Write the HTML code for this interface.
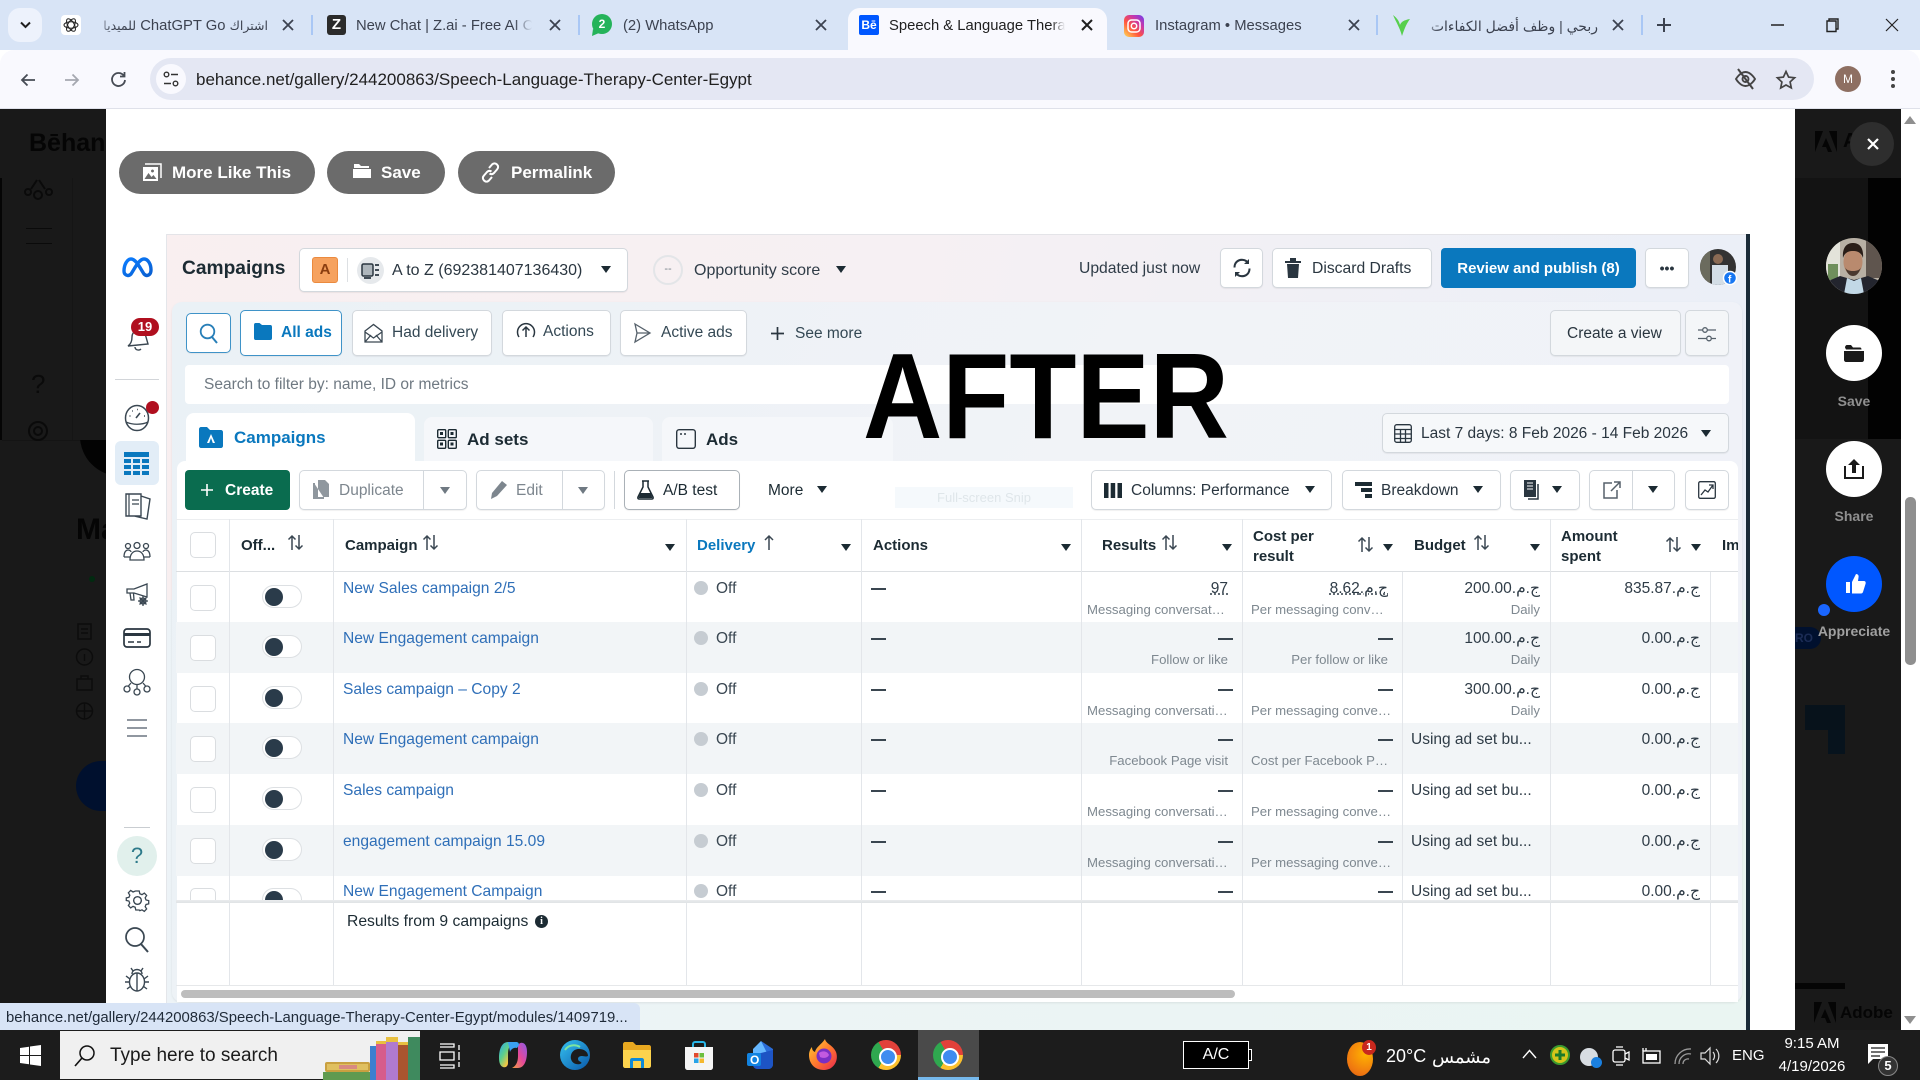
<!DOCTYPE html>
<html lang="en"><head><meta charset="utf-8"><title>Behance</title>
<style>
*{box-sizing:border-box}
html,body{margin:0;padding:0;width:1920px;height:1080px;overflow:hidden;background:#fff}
body{font-family:"Liberation Sans","Noto Sans CJK SC","DejaVu Sans",sans-serif;position:relative;color:#1c2b33}
.a,.t,.b{position:absolute}
.t{white-space:nowrap;line-height:20px;height:20px;transform:translateY(1px)}
.b{background:#fff;border:1px solid #d3d8dd;border-radius:5px;box-shadow:0 1px 1px rgba(0,0,0,.06)}
svg{position:absolute;overflow:visible}
.tab{font-size:14.8px;color:#3c4250}
.ar{font-size:12.5px}
.sep{position:absolute;top:15px;width:2px;height:20px;background:#a9c7f5}
.btn{position:absolute;top:151px;height:43px;background:#6b6b6b;border-radius:22px;color:#fff;font-weight:700;font-size:17px;line-height:43px}
.f{font-size:15.5px;color:#344854}
.c{position:absolute;width:0;height:0;border-left:5.5px solid transparent;border-right:5.5px solid transparent;border-top:7px solid #1c2b33}
.r{position:absolute;left:176px;width:1562px;height:51px}
.r.g{background:#f2f5f7}
.ck{position:absolute;left:14px;top:13px;width:26px;height:26px;background:#fff;border:1px solid #dadde0;border-radius:5px}
.tg{position:absolute;left:86px;top:13px;width:40px;height:23px;background:#fff;border:1px solid #dde0e3;border-radius:12px}
.tg:after{content:"";position:absolute;left:2px;top:2px;width:18px;height:18px;border-radius:50%;background:#2a3b4a}
.nm{position:absolute;left:167px;top:7px;font-size:15.6px;line-height:20px;color:#2f6fb8;white-space:nowrap}
.dot{position:absolute;left:518px;top:9px;width:14px;height:14px;border-radius:50%;background:#c6ccd2}
.of{position:absolute;left:540px;top:7px;font-size:15.5px;line-height:20px;color:#3a4752}
.d{position:absolute;height:2px;width:15px;background:#3a4650;top:16px}
.m{position:absolute;top:7px;font-size:15.5px;line-height:20px;color:#2f3c47;text-align:right;white-space:nowrap}
.s{position:absolute;top:29px;font-size:13.2px;line-height:18px;color:#7e8890;white-space:nowrap;text-align:right}
.h{font-size:15px;font-weight:700;color:#1c2b33}
.v{position:absolute;top:519px;width:1px;background:#e3e6ea}
.lb{color:#8f8f8f;font-weight:700;font-size:14px;text-align:center;width:100px;left:1803px}
.chr{position:absolute;top:1040px;width:30px;height:30px;border-radius:50%;background:conic-gradient(from -30deg,#e2413a 0 120deg,#fbc02d 120deg 240deg,#2fa84f 240deg 360deg)}
.chr:after{content:"";position:absolute;left:8px;top:8px;width:14px;height:14px;border-radius:50%;background:#3f8cf0;border:2px solid #fff}
</style></head><body>

<!-- browser chrome -->
<div class="a" style="left:0;top:0;width:1920px;height:50px;background:#d8e4f6"></div>
<div class="a" style="left:0;top:50px;width:1920px;height:59px;background:#f9f9fe;border-bottom:1px solid #dfe1ea;border-radius:14px 14px 0 0"></div>
<div class="a" style="left:8px;top:8px;width:34px;height:34px;background:#edf2fc;border-radius:12px"></div>
<svg style="left:20px;top:21px" width="11" height="8" viewBox="0 0 11 8"><path d="M1 1.500l4.500 4.500 4.500-4.500" fill="none" stroke="#1f1f1f" stroke-width="2"/></svg>

<div class="a" style="left:61px;top:15px;width:20px;height:20px;background:#fff;border-radius:4px"></div>
<svg style="left:63px;top:17px" width="16" height="16" viewBox="0 0 16 16"><g fill="none" stroke="#222" stroke-width="1"><ellipse cx="8" cy="8" rx="7" ry="3.200"/><ellipse cx="8" cy="8" rx="7" ry="3.200" transform="rotate(60 8 8)"/><ellipse cx="8" cy="8" rx="7" ry="3.200" transform="rotate(120 8 8)"/></g></svg>
<div class="t tab" dir="rtl" style="left:97px;top:15px;width:171px;overflow:hidden;-webkit-mask-image:linear-gradient(90deg,transparent,#000 14px)"><span class="ar">اشتراك</span> ChatGPT Go <span class="ar">للميديا</span></div>
<svg style="left:282px;top:19px" width="12" height="12" viewBox="0 0 12 12"><path d="M1 1l10 10M11 1L1 11" stroke="#3c4250" stroke-width="1.800"/></svg>
<div class="sep" style="left:311px"></div>
<div class="a" style="left:327px;top:15px;width:19px;height:20px;background:#2b2b2b;border-radius:3px;color:#fff;font:700 15px/20px 'Liberation Sans';text-align:center">Z</div>
<div class="t tab" style="left:356px;top:15px;width:176px;overflow:hidden;-webkit-mask-image:linear-gradient(270deg,transparent,#000 18px)">New Chat | Z.ai - Free AI Chatbot</div>
<svg style="left:549px;top:19px" width="12" height="12" viewBox="0 0 12 12"><path d="M1 1l10 10M11 1L1 11" stroke="#3c4250" stroke-width="1.800"/></svg>
<div class="sep" style="left:578px"></div>
<div class="a" style="left:592px;top:14px;width:20px;height:20px;background:#25b35a;border-radius:50%;color:#fff;font:700 12px/20px 'Liberation Sans';text-align:center">2</div>
<svg style="left:592px;top:29px" width="8" height="7" viewBox="0 0 8 7"><path d="M1 0L0 7l7-3z" fill="#25b35a"/></svg>
<div class="t tab" style="left:623px;top:15px">(2) WhatsApp</div>
<svg style="left:815px;top:19px" width="12" height="12" viewBox="0 0 12 12"><path d="M1 1l10 10M11 1L1 11" stroke="#3c4250" stroke-width="1.800"/></svg>

<div class="a" style="left:848px;top:8px;width:259px;height:44px;background:#f9f9fe;border-radius:12px 12px 0 0"></div>
<div class="a" style="left:859px;top:15px;width:20px;height:20px;background:#0057ff;border-radius:2px;color:#fff;font:700 12px/20px 'Liberation Sans';text-align:center">Bē</div>
<div class="t tab" style="left:889px;top:15px;width:176px;overflow:hidden;color:#1f1f1f;-webkit-mask-image:linear-gradient(270deg,transparent,#000 14px)">Speech &amp; Language Therapy Center</div>
<svg style="left:1081px;top:19px" width="12" height="12" viewBox="0 0 12 12"><path d="M1 1l10 10M11 1L1 11" stroke="#1f1f1f" stroke-width="2"/></svg>

<div class="a" style="left:1124px;top:15px;width:20px;height:22px;border-radius:5px;background:linear-gradient(45deg,#fd5 0,#ff543e 40%,#c837ab 70%,#6a3ff0)"></div>
<svg style="left:1124px;top:16px" width="20" height="20" viewBox="0 0 20 20"><rect x="4" y="4" width="12" height="12" rx="3.500" fill="none" stroke="#fff" stroke-width="1.500"/><circle cx="10" cy="10" r="2.700" fill="none" stroke="#fff" stroke-width="1.500"/></svg>
<div class="t tab" style="left:1155px;top:15px">Instagram • Messages</div>
<svg style="left:1348px;top:19px" width="12" height="12" viewBox="0 0 12 12"><path d="M1 1l10 10M11 1L1 11" stroke="#3c4250" stroke-width="1.800"/></svg>
<div class="sep" style="left:1376px"></div>
<svg style="left:1392px;top:14px" width="20" height="23" viewBox="0 0 20 23"><path d="M1 1c4 3 6 6 7 10 1-3 4-5 10-6-3 4-5 8-8 17C8 14 4 8 1 1z" fill="#57cf4d"/></svg>
<div class="t tab ar" dir="rtl" style="left:1424px;top:15px;width:174px;overflow:hidden;font-size:14px;-webkit-mask-image:linear-gradient(90deg,transparent,#000 14px)">ربحي | وظف أفضل الكفاءات</div>
<svg style="left:1612px;top:19px" width="12" height="12" viewBox="0 0 12 12"><path d="M1 1l10 10M11 1L1 11" stroke="#3c4250" stroke-width="1.800"/></svg>
<div class="sep" style="left:1641px"></div>
<svg style="left:1657px;top:18px" width="14" height="14" viewBox="0 0 14 14"><path d="M7 0v14M0 7h14" stroke="#3c4250" stroke-width="2"/></svg>
<svg style="left:1771px;top:24px" width="13" height="2" viewBox="0 0 13 2"><path d="M0 1h13" stroke="#222" stroke-width="1.500"/></svg>
<svg style="left:1826px;top:18px" width="13" height="14" viewBox="0 0 13 14"><path d="M3 3V1h9v10h-2M1 3h9v10.500H1z" fill="none" stroke="#222" stroke-width="1.400"/></svg>
<svg style="left:1885px;top:18px" width="14" height="14" viewBox="0 0 14 14"><path d="M1 1l12 12M13 1L1 13" stroke="#222" stroke-width="1.200"/></svg>

<!-- toolbar -->
<svg style="left:20px;top:72px" width="16" height="16" viewBox="0 0 16 16"><path d="M15 8H2M7.500 2.500L2 8l5.500 5.500" fill="none" stroke="#474c55" stroke-width="1.800"/></svg>
<svg style="left:64px;top:72px" width="16" height="16" viewBox="0 0 16 16"><path d="M1 8h13M8.500 2.500L14 8l-5.500 5.500" fill="none" stroke="#a5a8b0" stroke-width="1.800"/></svg>
<svg style="left:110px;top:71px" width="17" height="17" viewBox="0 0 17 17"><path d="M14 5A6.500 6.500 0 1 0 15 9M14.500 1v4.500H10" fill="none" stroke="#474c55" stroke-width="1.800"/></svg>
<div class="a" style="left:150px;top:58px;width:1664px;height:42px;background:#e4e7f3;border-radius:21px"></div>
<div class="a" style="left:156px;top:64px;width:30px;height:30px;background:#f9f9fe;border-radius:50%"></div>
<svg style="left:163px;top:71px" width="16" height="16" viewBox="0 0 16 16"><circle cx="3.500" cy="3.500" r="2.300" fill="none" stroke="#333" stroke-width="1.400"/><circle cx="12.500" cy="12.500" r="2.300" fill="none" stroke="#333" stroke-width="1.400"/><path d="M8 3.500h7M1 12.500h7" stroke="#333" stroke-width="1.400"/></svg>
<div class="t" style="left:196px;top:69px;font-size:17px;color:#1f1f1f">behance.net/gallery/244200863/Speech-Language-Therapy-Center-Egypt</div>
<svg style="left:1734px;top:68px" width="23" height="22" viewBox="0 0 23 22"><path d="M2 11s4-7 9.500-7 9.500 7 9.500 7-4 7-9.500 7S2 11 2 11z" fill="none" stroke="#444" stroke-width="1.900"/><circle cx="11.500" cy="11" r="3" fill="none" stroke="#444" stroke-width="1.900"/><path d="M4 1l15 20" stroke="#444" stroke-width="2"/></svg>
<svg style="left:1776px;top:70px" width="20" height="19" viewBox="0 0 20 19"><path d="M10 1.500l2.600 5.600 6 .7-4.500 4.100 1.200 6L10 15l-5.300 3 1.200-6L1.400 7.800l6-.7z" fill="none" stroke="#444" stroke-width="1.700"/></svg>
<div class="a" style="left:1835px;top:66px;width:26px;height:26px;border-radius:50%;background:#8e6f62;color:#fff;font:12px/26px 'Liberation Sans';text-align:center">M</div>
<div class="a" style="left:1891px;top:70px;width:4px;height:4px;border-radius:50%;background:#444;box-shadow:0 7px 0 #444,0 14px 0 #444"></div>

<!-- dark left overlay -->
<div class="a" style="left:0;top:109px;width:106px;height:921px;background:#191919;overflow:hidden">
  <div class="a" style="left:0;top:69px;width:2px;height:262px;background:#050505"></div>
  <div class="a" style="left:72px;top:69px;width:1px;height:262px;background:#151515"></div>
  <div class="a" style="left:2px;top:331px;width:104px;height:1px;background:#141414"></div>
  <div class="t" style="left:29px;top:19px;font-weight:700;font-size:25px;line-height:28px;height:28px;color:#050505">Bēhance</div>
  <div class="a" style="left:0;top:331px;width:106px;height:40px;overflow:hidden"><div class="a" style="left:80px;top:-44px;width:80px;height:80px;border-radius:50%;background:#030303"></div></div>
  <div class="t" style="left:76px;top:402px;font-weight:700;font-size:30px;line-height:36px;height:36px;color:#050505">Ma</div>
  <div class="a" style="left:89px;top:467px;width:6px;height:6px;border-radius:50%;background:#012a10"></div>
  <div class="a" style="left:76px;top:652px;width:70px;height:50px;border-radius:25px;background:#00102e"></div>
  <svg style="left:23px;top:70px" width="32" height="24" viewBox="0 0 32 24"><circle cx="15" cy="16" r="4" fill="none" stroke="#0a0a0a" stroke-width="2"/><circle cx="5" cy="13" r="3" fill="none" stroke="#0a0a0a" stroke-width="2"/><circle cx="26" cy="13" r="3" fill="none" stroke="#0a0a0a" stroke-width="2"/><path d="M8 10L14 1M22 10L16 1" stroke="#0a0a0a" stroke-width="2"/></svg>
  <div class="a" style="left:26px;top:119px;width:26px;height:16px;border-top:1.500px solid #0a0a0a;border-bottom:1.500px solid #0a0a0a"></div>
  <div class="t" style="left:31px;top:260px;font-size:26px;line-height:28px;height:28px;color:#0a0a0a">?</div>
  <svg style="left:26px;top:310px" width="24" height="24" viewBox="0 0 24 24"><circle cx="12" cy="12" r="9" fill="none" stroke="#0a0a0a" stroke-width="2"/><circle cx="12" cy="12" r="4" fill="none" stroke="#0a0a0a" stroke-width="2"/></svg>
  <svg style="left:76px;top:512px" width="18" height="100" viewBox="0 0 18 100"><g fill="none" stroke="#0c0c0c" stroke-width="1.500"><rect x="2" y="3" width="13" height="15"/><path d="M5 8h7M5 12h7"/><circle cx="8.500" cy="36" r="8"/><path d="M8.500 33v7"/><rect x="1" y="58" width="15" height="11"/><path d="M5 58v-3h7v3"/><circle cx="8.500" cy="90" r="8"/><path d="M1 90h15M8.500 82v16"/></g></svg>
</div>

<!-- dark right overlay -->
<div class="a" style="left:1795px;top:109px;width:106px;height:921px;background:#191919;overflow:hidden">
  <div class="a" style="left:0;top:69px;width:73px;height:261px;background:#131313"></div>
  <div class="a" style="left:73px;top:69px;width:33px;height:261px;background:#020202"></div>
  <svg style="left:20px;top:22px" width="22" height="21" viewBox="0 0 22 21"><path d="M0 0h8L0 21zM22 0h-8l8 21zM11 7l6 14h-4l-2-5H7z" fill="#050505"/></svg>
  <div class="t" style="left:48px;top:21px;font-weight:700;font-size:20px;color:#050505">A</div>
  <div class="a" style="left:0;top:518px;width:26px;height:22px;border-radius:0 12px 12px 0;background:#00102e;color:#1b2c55;font:700 12px/22px 'Liberation Sans';text-align:right;padding-right:8px">RO</div>
  <div class="a" style="left:10px;top:596px;width:40px;height:25px;background:#07121b"></div>
  <div class="a" style="left:33px;top:621px;width:17px;height:24px;background:#07131d"></div>
  <div class="a" style="left:0;top:874px;width:50px;height:6px;background:#050505"></div>
  <svg style="left:19px;top:893px" width="22" height="21" viewBox="0 0 22 21"><path d="M0 0h8L0 21zM22 0h-8l8 21zM11 7l6 14h-4l-2-5H7z" fill="#050505"/></svg>
  <div class="t" style="left:45px;top:893px;font-weight:700;font-size:17px;color:#050505">Adobe</div>
</div>
<div class="a" style="left:1901px;top:109px;width:19px;height:921px;background:#fff"></div>
<div class="a" style="left:1905px;top:497px;width:11px;height:168px;background:#8f8f8f;border-radius:5px"></div>
<svg style="left:1904px;top:116px" width="12" height="8" viewBox="0 0 12 8"><path d="M0 8L6 0l6 8z" fill="#8f8f8f"/></svg>
<svg style="left:1904px;top:1016px" width="12" height="8" viewBox="0 0 12 8"><path d="M0 0l6 8 6-8z" fill="#8f8f8f"/></svg>

<div class="a" style="left:1850px;top:122px;width:44px;height:44px;border-radius:50%;background:#2e2e2e"></div>
<svg style="left:1867px;top:138px" width="12" height="12" viewBox="0 0 12 12"><path d="M1 1l10 10M11 1L1 11" stroke="#fff" stroke-width="2.200"/></svg>
<svg style="left:1826px;top:238px" width="56" height="56" viewBox="0 0 56 56"><defs><clipPath id="av"><circle cx="28" cy="28" r="28"/></clipPath></defs><g clip-path="url(#av)"><rect width="56" height="56" fill="#b8b0a4"/><rect width="14" height="56" fill="#e3e3da"/><rect x="2" y="26" width="10" height="16" fill="#6f8f5c"/><rect x="40" y="0" width="16" height="40" fill="#5f554e"/><path d="M0 56V44l14-6 14 4 14-4 14 6v12z" fill="#23252e"/><path d="M21 40l7 3 7-3 3 16H18z" fill="#c2d8e6"/><ellipse cx="27" cy="24" rx="9.500" ry="13" fill="#b98a6e"/><path d="M17 20c-1-12 5-15 10-15s11 3 10 15c-2-6-6-7-10-7s-8 1-10 7z" fill="#2a1e18"/><path d="M19 29c2 7 5 9 8 9s6-2 8-9c-1 3-4 4-8 4s-7-1-8-4z" fill="#4a382e"/></g></svg>
<div class="a" style="left:1826px;top:325px;width:56px;height:56px;border-radius:50%;background:#fff"></div>
<svg style="left:1844px;top:344px" width="20" height="18" viewBox="0 0 20 18"><path d="M1 3.500C1 2 2 1 3 1h4l2 2.500h7c1 0 1.500 1 1.500 2H2zM0 7h20v9c0 1-1 2-2 2H2c-1 0-2-1-2-2z" fill="#1a1a1a"/></svg>
<div class="t lb" style="top:390px;left:1804px">Save</div>
<div class="a" style="left:1826px;top:441px;width:56px;height:56px;border-radius:50%;background:#fff"></div>
<svg style="left:1844px;top:458px" width="20" height="21" viewBox="0 0 20 21"><path d="M1 8v12h18V8" fill="none" stroke="#1a1a1a" stroke-width="2"/><path d="M10 1l6 6h-4v8H8V7H4z" fill="#1a1a1a"/></svg>
<div class="t lb" style="top:505px;left:1804px">Share</div>
<div class="a" style="left:1826px;top:556px;width:56px;height:56px;border-radius:50%;background:#0057ff"></div>
<svg style="left:1846px;top:574px" width="20" height="20" viewBox="0 0 20 20"><path d="M0 8h4v11H0zM6 8l4-8c2 0 3 1.500 2.500 3.500L12 7h6c1.500 0 2 1.500 1.500 3L17 18c-.4 1-1 1.500-2 1.500H6z" fill="#fff"/></svg>
<div class="a" style="left:1818px;top:604px;width:12px;height:12px;border-radius:50%;background:#1a66ff"></div>
<div class="t lb" style="top:620px;left:1804px;color:#a0a0a0">Appreciate</div>

<!-- white lightbox -->
<div class="a" style="left:106px;top:109px;width:1689px;height:921px;background:#fff"></div>
<div class="btn" style="left:119px;width:196px;padding-left:53px">More Like This</div>
<svg style="left:142px;top:163px" width="20" height="19" viewBox="0 0 20 19"><path d="M3 1h16v14" fill="none" stroke="#fff" stroke-width="1.500"/><rect x="1" y="4" width="15" height="14" fill="#fff"/><path d="M2.500 16l4-6 3 4 2-2 3 4zM12 8a1.500 1.500 0 1 1 0-.01" fill="#6b6b6b"/></svg>
<div class="btn" style="left:327px;width:118px;padding-left:54px">Save</div>
<svg style="left:353px;top:162px" width="18" height="17" viewBox="0 0 18 17"><path d="M1 2h5l2 2h8v2H1zM0 7h18v9H0z" fill="#fff"/></svg>
<div class="btn" style="left:458px;width:157px;padding-left:53px">Permalink</div>
<svg style="left:481px;top:162px" width="19" height="21" viewBox="0 0 19 21"><path d="M8 6l3-3.500c1.500-1.500 3.500-1.500 5 0s1.500 3.500 0 5l-3 3.500c-1.500 1.500-3 1.500-4.500.5M11 15l-3 3.500c-1.500 1.500-3.500 1.500-5 0s-1.500-3.500 0-5l3-3.500c1.500-1.500 3-1.500 4.500-.5" fill="none" stroke="#fff" stroke-width="2"/></svg>

<!-- embedded screenshot -->
<div class="a" style="left:106px;top:234px;width:1642px;height:796px;background:linear-gradient(100deg,#f9eff0 0,#f6f0f3 45%,#e9eff8 100%)"></div>
<div class="a" style="left:106px;top:600px;width:1642px;height:430px;background:linear-gradient(90deg,#edf3f7,#eaf5f2)"></div>
<div class="a" style="left:106px;top:234px;width:1642px;height:1px;background:#e4e4e8"></div>
<div class="a" style="left:1746px;top:234px;width:4px;height:796px;background:#1a2b38"></div>
<div class="a" style="left:106px;top:234px;width:61px;height:769px;background:#fff;border-right:1px solid #e4e6ea"></div>

<!-- sidebar icons -->
<svg style="left:122px;top:256px" width="31" height="23" viewBox="0 0 31 23"><defs><linearGradient id="mg" x1="0" x2="1" y1="0" y2="1"><stop offset="0" stop-color="#0a7cff"/><stop offset="1" stop-color="#0a5fd0"/></linearGradient></defs><path d="M2 15c0-6 3-12 7-12 5 0 9 9 13 15 3 3 7 1 7-4 0-6-3-11-7-11-5 0-9 9-13 15-3 3-7 1-7-3z" fill="none" stroke="url(#mg)" stroke-width="3.400"/></svg>
<svg style="left:126px;top:325px" width="24" height="28" viewBox="0 0 24 28"><path d="M2 21c3-2 4-5 4-9 0-4 3-7 7-7s6 3 7 7l2 7z" fill="#fff" stroke="#3a4752" stroke-width="1.400"/><path d="M9 22c0 3 4 4 6 2" fill="none" stroke="#3a4752" stroke-width="1.400"/></svg>
<div class="a" style="left:131px;top:318px;width:28px;height:18px;background:#b00f1f;border-radius:9px;color:#fff;font:700 13px/18px 'Liberation Sans';text-align:center">19</div>
<div class="a" style="left:115px;top:379px;width:44px;height:1px;background:#d2d5d9"></div>
<svg style="left:124px;top:404px" width="26" height="29" viewBox="0 0 26 29"><ellipse cx="13" cy="14" rx="11.500" ry="12.500" fill="#fff" stroke="#3a4752" stroke-width="1.500"/><path d="M2 18c6 3 16 3 22 0" fill="none" stroke="#3a4752" stroke-width="1.300"/><path d="M12 14l4-5M5.500 12h1M8 7h.8M13 5.500h.8M20 12h1" stroke="#3a4752" stroke-width="1.600"/></svg>
<div class="a" style="left:146px;top:401px;width:13px;height:13px;border-radius:50%;background:#b00f1f"></div>
<div class="a" style="left:115px;top:441px;width:44px;height:44px;background:#e2edf7;border-radius:6px"></div>
<svg style="left:124px;top:452px" width="25" height="23" viewBox="0 0 25 23"><path d="M0 0h25v5H0zM0 7h7v4H0zM9 7h7v4H9zM18 7h7v4h-7zM0 13h7v4H0zM9 13h7v4H9zM18 13h7v4h-7zM0 19h7v4H0zM9 19h7v4H9zM18 19h7v4h-7z" fill="#0a78be"/></svg>
<svg style="left:123px;top:493px" width="28" height="27" viewBox="0 0 28 27"><path d="M18 1h-15v22h15z M18 3l9 3-3 20-13-3" fill="none" stroke="#3a4752" stroke-width="1.400"/><path d="M6 1v22M9 7h7M9 11h7" stroke="#3a4752" stroke-width="1.200"/></svg>
<svg style="left:123px;top:541px" width="28" height="20" viewBox="0 0 28 20"><g fill="none" stroke="#3a4752" stroke-width="1.300"><circle cx="14" cy="4.500" r="3"/><circle cx="5" cy="5" r="2.500"/><circle cx="23" cy="5" r="2.500"/><path d="M1 16c0-5 2-7 4-7 1.500 0 3 1 3 2M27 16c0-5-2-7-4-7-1.500 0-3 1-3 2M7 19c0-6 3-9 7-9s7 3 7 9zM1 16h6M21 16h6"/></g></svg>
<svg style="left:125px;top:583px" width="25" height="24" viewBox="0 0 25 24"><g fill="none" stroke="#3a4752" stroke-width="1.300"><path d="M22 1v13L9 10H2V6h7z"/><path d="M5 10l1 7h3l-.5-7"/><circle cx="18" cy="18" r="3"/><path d="M18 13v10M13 18h10M14.500 14.500l7 7M21.500 14.500l-7 7"/></g></svg>
<svg style="left:123px;top:628px" width="28" height="20" viewBox="0 0 28 20"><rect x="1" y="1" width="26" height="18" rx="3" fill="none" stroke="#2a3640" stroke-width="1.700"/><path d="M1 5h26v3H1z" fill="#2a3640"/><path d="M5 14h6M14 14h4" stroke="#2a3640" stroke-width="1.400"/></svg>
<svg style="left:123px;top:668px" width="28" height="28" viewBox="0 0 28 28"><g fill="none" stroke="#3a4752" stroke-width="1.300"><circle cx="14" cy="9" r="7.500"/><circle cx="4" cy="21" r="3"/><circle cx="14" cy="24" r="3"/><circle cx="24" cy="21" r="3"/><path d="M8 15l-3 3.500M14 17v4M20 15l3 3.500"/></g></svg>
<svg style="left:127px;top:719px" width="20" height="18" viewBox="0 0 20 18"><path d="M0 1h20M0 9h20M0 17h20" stroke="#6b7580" stroke-width="1.400"/></svg>
<div class="a" style="left:124px;top:827px;width:26px;height:1px;background:#c9cdd1"></div>
<div class="a" style="left:117px;top:836px;width:40px;height:40px;border-radius:50%;background:#e1f0ec;color:#2d7a8a;font:22px/40px 'Liberation Sans';text-align:center">?</div>
<svg style="left:126px;top:889px" width="23" height="23" viewBox="0 0 24 24"><g fill="none" stroke="#3a4752" stroke-width="1.500"><circle cx="12" cy="12" r="4"/><path d="M10 1h4l.7 3.200 2.500 1 2.700-1.800 2.700 2.800-1.700 2.700 1 2.500 3.100.7v3.800l-3.100.7-1 2.500 1.700 2.700-2.700 2.800-2.700-1.800-2.500 1L14 23h-4l-.7-3.200-2.500-1-2.700 1.800-2.700-2.800L3 15.100l-1-2.500L-1 12V9l3.100-.7 1-2.500-1.700-2.700 2.700-2.800 2.700 1.800 2.500-1z" transform="translate(1.200 1.200) scale(.9)"/></g></svg>
<svg style="left:125px;top:927px" width="24" height="26" viewBox="0 0 24 26"><circle cx="10" cy="10" r="9" fill="none" stroke="#3a4752" stroke-width="1.700"/><path d="M16 17l7 8" stroke="#3a4752" stroke-width="2"/></svg>
<svg style="left:125px;top:967px" width="24" height="25" viewBox="0 0 24 25"><g fill="none" stroke="#3a4752" stroke-width="1.400"><ellipse cx="12" cy="15" rx="7.500" ry="9"/><path d="M12 6v18M7 7c0-6 10-6 10 0M1 9l4 3M23 9l-4 3M0 15h4M24 15h-4M2 22l4-3M22 22l-4-3M6 1l2 3M18 1l-2 3"/></g></svg>

<!-- top bar -->
<div class="t" style="left:182px;top:258px;font-size:19.2px;font-weight:700;color:#1c2b33">Campaigns</div>
<div class="b" style="left:299px;top:248px;width:329px;height:44px"></div>
<div class="a" style="left:312px;top:257px;width:26px;height:26px;background:#f6a25f;border-radius:3px;border:1px solid #eb8a3e;color:#8a3e10;font:700 15px/24px 'Liberation Sans';text-align:center">A</div>
<div class="a" style="left:347px;top:258px;width:1px;height:24px;background:#dde0e3"></div>
<div class="a" style="left:357px;top:257px;width:27px;height:27px;border-radius:50%;background:#e6e9ec"></div>
<svg style="left:361px;top:262px" width="20" height="17" viewBox="0 0 20 17"><rect x="1" y="2" width="11" height="12" rx="1.500" fill="#aeb6bc" stroke="#2a3640" stroke-width="1.500"/><path d="M3 16h7M14 3h4M14 8h4M14 13h4" stroke="#2a3640" stroke-width="1.800"/></svg>
<div class="t f" style="left:392px;top:260px;font-size:16px;color:#2a3640">A to Z (692381407136430)</div>
<div class="c" style="left:601px;top:266px"></div>
<div class="a" style="left:653px;top:255px;width:30px;height:30px;border-radius:50%;border:2px solid #e3e5e8;color:#7a848c;font:11px/24px 'Liberation Sans';text-align:center">--</div>
<div class="t f" style="left:694px;top:260px;font-size:16px;color:#2f3c47">Opportunity score</div>
<div class="c" style="left:836px;top:266px"></div>
<div class="t f" style="left:1079px;top:258px;font-size:15.700px;color:#2f3c47">Updated just now</div>
<div class="b" style="left:1220px;top:248px;width:43px;height:40px"></div>
<svg style="left:1232px;top:258px" width="20" height="20" viewBox="0 0 20 20"><path d="M16 5C14 1.500 8 .500 4.500 4 3 5.500 2.500 7.500 2.500 9.500M4 15c2 3.500 8 4.500 11.500 1 1.500-1.500 2-3.500 2-5.500" fill="none" stroke="#2a3640" stroke-width="2"/><path d="M17 1v5h-5M3 19v-5h5" fill="#2a3640"/></svg>
<div class="b" style="left:1272px;top:248px;width:160px;height:40px"></div>
<svg style="left:1285px;top:258px" width="16" height="20" viewBox="0 0 16 20"><path d="M0 3h16v2H0zM5 0h6v3H5zM2 6h12l-1 14H3z" fill="#2a3640"/></svg>
<div class="t f" style="left:1312px;top:258px;font-size:15.700px;color:#2a3640">Discard Drafts</div>
<div class="a" style="left:1441px;top:248px;width:195px;height:40px;background:#0a78be;border-radius:4px;color:#fff;font:700 15px/41px 'Liberation Sans';text-align:center">Review and publish (8)</div>
<div class="b" style="left:1645px;top:248px;width:44px;height:40px;color:#2a3640;font:700 14px/38px 'Liberation Sans';text-align:center">•••</div>
<svg style="left:1700px;top:249px" width="38" height="36" viewBox="0 0 38 36"><defs><clipPath id="av2"><ellipse cx="18" cy="18" rx="18" ry="18"/></clipPath></defs><g clip-path="url(#av2)"><rect width="36" height="36" fill="#333"/><rect x="0" width="10" height="36" fill="#6b6b5e"/><rect x="12" y="16" width="16" height="20" fill="#d3dde6"/><circle cx="18" cy="10" r="5" fill="#8a6a54"/></g><circle cx="30" cy="29" r="6.500" fill="#1877f2" stroke="#fff" stroke-width="1.500"/><text x="28" y="33.500" font-size="10" font-weight="700" fill="#fff" font-family="Liberation Sans">f</text></svg>

<!-- main panel -->
<div class="a" style="left:172px;top:302px;width:1570px;height:700px;background:linear-gradient(120deg,#eaf1f6,#f1f3f7 50%,#eff2f8);border-radius:10px;box-shadow:0 1px 2px rgba(0,0,0,.08)"></div>

<!-- filters -->
<div class="b" style="left:186px;top:313px;width:45px;height:40px;border-color:#3f93c8"></div>
<svg style="left:199px;top:323px" width="20" height="21" viewBox="0 0 20 21"><circle cx="8.500" cy="8.500" r="6.800" fill="none" stroke="#287fb8" stroke-width="1.800"/><path d="M13 14l5 6" stroke="#287fb8" stroke-width="2"/></svg>
<div class="b" style="left:240px;top:310px;width:102px;height:46px;border-color:#3f93c8"></div>
<svg style="left:254px;top:323px" width="18" height="17" viewBox="0 0 18 17"><path d="M0 2c0-1 .5-2 1.500-2h4L8 2h8.500c1 0 1.500 1 1.500 2v11c0 1-.5 2-1.500 2h-15C.5 17 0 16 0 15z" fill="#0a78be"/></svg>
<div class="t" style="left:281px;top:322px;font-size:15.500px;font-weight:700;color:#0a78be">All ads</div>
<div class="b" style="left:352px;top:310px;width:140px;height:46px"></div>
<svg style="left:364px;top:323px" width="19" height="20" viewBox="0 0 19 20"><path d="M1 8l8.500-6.500L18 8v11H1zM1 9l8.500 6L18 9M1 19l6-7M18 19l-6-7" fill="none" stroke="#3a4752" stroke-width="1.300"/></svg>
<div class="t f" style="left:392px;top:322px">Had delivery</div>
<div class="b" style="left:502px;top:310px;width:109px;height:46px"></div>
<svg style="left:516px;top:321px" width="20" height="20" viewBox="0 0 20 20"><path d="M3 16a8.500 8.500 0 1 1 14 0M10 16V6M6.500 9.500L10 6l3.500 3.500" fill="none" stroke="#2a3640" stroke-width="1.500"/></svg>
<div class="t f" style="left:543px;top:321px">Actions</div>
<div class="b" style="left:620px;top:310px;width:127px;height:46px"></div>
<svg style="left:633px;top:323px" width="19" height="20" viewBox="0 0 19 20"><path d="M2 1l15 9L2 19l2-9zM4 10h13" fill="none" stroke="#56616b" stroke-width="1.300"/></svg>
<div class="t f" style="left:661px;top:322px">Active ads</div>
<svg style="left:771px;top:327px" width="13" height="13" viewBox="0 0 13 13"><path d="M6.500 0v13M0 6.500h13" stroke="#2a3640" stroke-width="1.700"/></svg>
<div class="t f" style="left:795px;top:323px">See more</div>
<div class="b" style="left:1550px;top:310px;width:131px;height:46px;background:#f4f6f8"></div>
<div class="t f" style="left:1567px;top:323px;color:#2a3640">Create a view</div>
<div class="b" style="left:1685px;top:310px;width:44px;height:46px;background:#f4f6f8"></div>
<svg style="left:1698px;top:327px" width="18" height="15" viewBox="0 0 18 15"><g fill="none" stroke="#56616b" stroke-width="1.300"><circle cx="7" cy="3" r="2.300"/><circle cx="11" cy="11.500" r="2.300"/><path d="M0 3h4.500M9.500 3H18M0 11.500h8.500M13.500 11.500H18"/></g></svg>

<div class="a" style="left:185px;top:365px;width:1544px;height:39px;background:#fff;border-radius:4px"></div>
<div class="t" style="left:204px;top:374px;font-size:15.500px;color:#6f7982">Search to filter by: name, ID or metrics</div>

<!-- level tabs -->
<div class="a" style="left:186px;top:413px;width:229px;height:50px;background:#fff;border-radius:8px 8px 0 0"></div>
<svg style="left:199px;top:427px" width="24" height="21" viewBox="0 0 24 21"><path d="M0 2c0-1 1-2 2-2h6l3 3h11c1 0 2 1 2 2v14c0 1-1 2-2 2H2c-1 0-2-1-2-2z" fill="#0a78be"/><path d="M12 7l-4 9h2.200L12 11l1.800 5H16z" fill="#fff"/></svg>
<div class="t" style="left:234px;top:427px;font-size:17px;font-weight:700;color:#0a78be">Campaigns</div>
<div class="a" style="left:424px;top:417px;width:229px;height:46px;background:#f5f7fa;border-radius:8px 8px 0 0"></div>
<svg style="left:437px;top:429px" width="20" height="20" viewBox="0 0 20 20"><g fill="none" stroke="#1c2b33" stroke-width="1.400"><rect x=".7" y=".7" width="8" height="8" rx="1"/><rect x="11.300" y=".7" width="8" height="8" rx="1"/><rect x=".7" y="11.300" width="8" height="8" rx="1"/><rect x="11.300" y="11.300" width="8" height="8" rx="1"/></g><path d="M3 3h3v3H3zM13.500 3h3v3h-3zM3 13.500h3v3H3zM13.500 13.500h3v3h-3z" fill="#1c2b33"/></svg>
<div class="t" style="left:467px;top:429px;font-size:17px;font-weight:700;color:#1c2b33">Ad sets</div>
<div class="a" style="left:662px;top:417px;width:231px;height:46px;background:#f5f7fa;border-radius:8px 8px 0 0"></div>
<svg style="left:676px;top:429px" width="20" height="20" viewBox="0 0 20 20"><rect x=".7" y=".7" width="18.600" height="18.600" rx="2.500" fill="none" stroke="#2a3640" stroke-width="1.400"/><path d="M4 5h2M8 5h2" stroke="#2a3640" stroke-width="1.500"/></svg>
<div class="t" style="left:706px;top:429px;font-size:17px;font-weight:700;color:#1c2b33">Ads</div>
<div class="b" style="left:1382px;top:413px;width:347px;height:40px;background:#f6f8fa"></div>
<svg style="left:1394px;top:424px" width="18" height="19" viewBox="0 0 18 19"><g fill="none" stroke="#2a3640" stroke-width="1.300"><rect x=".7" y=".7" width="16.600" height="17.600" rx="2"/><path d="M.7 5.500h16.600M.7 10h16.600M.7 14.500h16.600M6.500 5.500v13M11.500 5.500v13"/></g></svg>
<div class="t f" style="left:1421px;top:423px;color:#2a3640">Last 7 days: 8 Feb 2026 - 14 Feb 2026</div>
<div class="c" style="left:1701px;top:430px"></div>

<!-- action bar -->
<div class="a" style="left:177px;top:461px;width:1561px;height:541px;background:#fff;border-radius:8px 8px 0 0"></div>
<div class="a" style="left:185px;top:470px;width:105px;height:40px;background:#0a6c4f;border-radius:4px"></div>
<svg style="left:201px;top:484px" width="12" height="12" viewBox="0 0 12 12"><path d="M6 0v12M0 6h12" stroke="#fff" stroke-width="1.600"/></svg>
<div class="t" style="left:225px;top:480px;font-size:15.500px;font-weight:700;color:#fff">Create</div>
<div class="b" style="left:299px;top:470px;width:168px;height:40px"></div>
<div class="a" style="left:423px;top:470px;width:1px;height:40px;background:#d3d8dd"></div>
<svg style="left:311px;top:480px" width="18" height="20" viewBox="0 0 18 20"><path d="M7 0h7l4 4v13H7zM3 3v15h10" fill="#8f979e"/><path d="M3 3v15h10" fill="none" stroke="#8f979e" stroke-width="2"/></svg>
<div class="t f" style="left:339px;top:480px;color:#7d868e">Duplicate</div>
<div class="c" style="left:440px;top:487px;border-top-color:#6f7982"></div>
<div class="b" style="left:476px;top:470px;width:129px;height:40px"></div>
<div class="a" style="left:562px;top:470px;width:1px;height:40px;background:#d3d8dd"></div>
<svg style="left:490px;top:481px" width="17" height="18" viewBox="0 0 17 18"><path d="M12 0l5 4L7 15l-6 3 1-6z" fill="#7d868e"/></svg>
<div class="t f" style="left:516px;top:480px;color:#7d868e">Edit</div>
<div class="c" style="left:578px;top:487px;border-top-color:#6f7982"></div>
<div class="a" style="left:614px;top:471px;width:1px;height:38px;background:#d3d8dd"></div>
<div class="b" style="left:624px;top:470px;width:116px;height:40px;border-color:#aab1b7"></div>
<svg style="left:637px;top:480px" width="17" height="20" viewBox="0 0 17 20"><path d="M5 1h7M6 1v6L1 17c-.5 1 0 2 1 2h13c1 0 1.500-1 1-2L11 7V1" fill="#fff" stroke="#1c2b33" stroke-width="1.500"/><path d="M3.500 13h10l2 5H1.500z" fill="#1c2b33"/></svg>
<div class="t f" style="left:663px;top:480px;color:#1c2b33">A/B test</div>
<div class="t f" style="left:768px;top:480px;color:#1c2b33">More</div>
<div class="c" style="left:817px;top:486px"></div>
<div class="a" style="left:895px;top:487px;width:178px;height:21px;background:#f5f9fc;color:#dfe6ea;font:13px/21px 'Liberation Sans';text-align:center">Full-screen Snip</div>
<div class="b" style="left:1091px;top:470px;width:241px;height:40px"></div>
<svg style="left:1104px;top:483px" width="18" height="15" viewBox="0 0 18 15"><path d="M0 0h4.500v15H0zM6.700 0h4.500v15H6.700zM13.500 0H18v15h-4.500z" fill="#1c2b33"/></svg>
<div class="t f" style="left:1131px;top:480px;color:#2a3640">Columns: Performance</div>
<div class="c" style="left:1305px;top:486px"></div>
<div class="b" style="left:1342px;top:470px;width:159px;height:40px"></div>
<svg style="left:1355px;top:482px" width="17" height="16" viewBox="0 0 17 16"><path d="M0 0h17v4H0zM6 6h11v4H6zM10 12h7v4h-7z" fill="#1c2b33"/></svg>
<div class="t f" style="left:1381px;top:480px;color:#2a3640">Breakdown</div>
<div class="c" style="left:1473px;top:486px"></div>
<div class="b" style="left:1510px;top:470px;width:70px;height:40px"></div>
<svg style="left:1523px;top:480px" width="18" height="20" viewBox="0 0 18 20"><path d="M1 0h12v17H1z" fill="#2a3640"/><path d="M15 4v15H5" fill="none" stroke="#2a3640" stroke-width="1.500"/><path d="M4 3h6M4 6h6M4 9h6" stroke="#fff" stroke-width="1"/></svg>
<div class="c" style="left:1552px;top:486px"></div>
<div class="b" style="left:1589px;top:470px;width:86px;height:40px"></div>
<div class="a" style="left:1632px;top:470px;width:1px;height:40px;background:#d3d8dd"></div>
<svg style="left:1603px;top:481px" width="18" height="18" viewBox="0 0 18 18"><path d="M9 2H1v15h13V9M8 10l9-9M11 1h6v6" fill="none" stroke="#56616b" stroke-width="1.500"/></svg>
<div class="c" style="left:1648px;top:486px"></div>
<div class="b" style="left:1685px;top:470px;width:44px;height:40px"></div>
<svg style="left:1698px;top:481px" width="18" height="18" viewBox="0 0 18 18"><rect x=".7" y=".7" width="16.600" height="16.600" rx="1.500" fill="none" stroke="#2a3640" stroke-width="1.300"/><path d="M3 14l4-5 3 2 5-7M11 4h4v4" fill="none" stroke="#2a3640" stroke-width="1.300"/></svg>

<!-- table header -->
<svg width="0" height="0" style="position:absolute"><defs><symbol id="ud" viewBox="0 0 17 17"><path d="M5 16V2M1.500 5.500L5 2l3.500 3.500M12 1v14M8.500 11.500L12 15l3.500-3.500" fill="none" stroke="#3a4752" stroke-width="1.500"/></symbol></defs></svg>
<div class="a" style="left:176px;top:519px;width:1562px;height:1px;background:#eceef0"></div>
<div class="a" style="left:176px;top:571px;width:1562px;height:1px;background:#dcdfe2"></div>
<div class="a" style="left:190px;top:532px;width:26px;height:26px;background:#fff;border:1px solid #dadde0;border-radius:5px"></div>
<div class="t h" style="left:241px;top:535px">Off...</div>
<svg style="left:287px;top:534px" width="17" height="17"><use href="#ud"/></svg>
<div class="t h" style="left:345px;top:535px">Campaign</div>
<svg style="left:422px;top:534px" width="17" height="17"><use href="#ud"/></svg>
<div class="c" style="left:665px;top:544px"></div>
<div class="t h" style="left:697px;top:535px;color:#0a78be">Delivery</div>
<svg style="left:763px;top:534px" width="12" height="17" viewBox="0 0 12 17"><path d="M6 16V2M2 6l4-4 4 4" fill="none" stroke="#3a4752" stroke-width="1.500"/></svg>
<div class="c" style="left:841px;top:544px"></div>
<div class="t h" style="left:873px;top:535px">Actions</div>
<div class="c" style="left:1061px;top:544px"></div>
<div class="t h" style="left:1102px;top:535px">Results</div>
<svg style="left:1161px;top:534px" width="17" height="17"><use href="#ud"/></svg>
<div class="c" style="left:1222px;top:544px"></div>
<div class="t h" style="left:1253px;top:526px">Cost per</div>
<div class="t h" style="left:1253px;top:546px">result</div>
<svg style="left:1357px;top:536px" width="17" height="17"><use href="#ud"/></svg>
<div class="c" style="left:1383px;top:544px"></div>
<div class="t h" style="left:1414px;top:535px">Budget</div>
<svg style="left:1473px;top:534px" width="17" height="17"><use href="#ud"/></svg>
<div class="c" style="left:1530px;top:544px"></div>
<div class="t h" style="left:1561px;top:526px">Amount</div>
<div class="t h" style="left:1561px;top:546px">spent</div>
<svg style="left:1665px;top:536px" width="17" height="17"><use href="#ud"/></svg>
<div class="c" style="left:1691px;top:544px"></div>
<div class="t h" style="left:1722px;top:535px;width:16px;overflow:hidden">Im</div>

<!-- rows -->
<div class="a" style="left:0;top:0;width:1920px;height:902px;overflow:hidden">
<div class="r" style="top:572px"><i class="ck"></i><i class="tg"></i><span class="nm">New Sales campaign 2/5</span><i class="dot"></i><span class="of">Off</span><i class="d" style="left:695px"></i>
<span class="m" style="right:510px;text-decoration:underline dotted">97</span><span class="s" style="right:511px;width:140px;overflow:hidden;text-overflow:ellipsis">Messaging conversations started</span>
<span class="m" style="right:350px;text-decoration:underline dotted">8.62<bdi dir="rtl">ج.م.</bdi></span><span class="s" style="right:350px;width:137px;overflow:hidden;text-overflow:ellipsis;text-align:left">Per messaging conversation</span>
<span class="m" style="right:198px">200.00<bdi dir="rtl">ج.م.</bdi></span><span class="s" style="right:198px">Daily</span>
<span class="m" style="right:38px">835.87<bdi dir="rtl">ج.م.</bdi></span></div>

<div class="r g" style="top:622px"><i class="ck"></i><i class="tg"></i><span class="nm">New Engagement campaign</span><i class="dot"></i><span class="of">Off</span><i class="d" style="left:695px"></i>
<i class="d" style="left:1042px"></i><span class="s" style="right:510px">Follow or like</span>
<i class="d" style="left:1202px"></i><span class="s" style="right:350px">Per follow or like</span>
<span class="m" style="right:198px">100.00<bdi dir="rtl">ج.م.</bdi></span><span class="s" style="right:198px">Daily</span>
<span class="m" style="right:38px">0.00<bdi dir="rtl">ج.م.</bdi></span></div>

<div class="r" style="top:673px"><i class="ck"></i><i class="tg"></i><span class="nm">Sales campaign – Copy 2</span><i class="dot"></i><span class="of">Off</span><i class="d" style="left:695px"></i>
<i class="d" style="left:1042px"></i><span class="s" style="right:507px;width:144px;overflow:hidden;text-overflow:ellipsis">Messaging conversations started</span>
<i class="d" style="left:1202px"></i><span class="s" style="right:345px;width:142px;overflow:hidden;text-overflow:ellipsis;text-align:left">Per messaging conversation</span>
<span class="m" style="right:198px">300.00<bdi dir="rtl">ج.م.</bdi></span><span class="s" style="right:198px">Daily</span>
<span class="m" style="right:38px">0.00<bdi dir="rtl">ج.م.</bdi></span></div>

<div class="r g" style="top:723px"><i class="ck"></i><i class="tg"></i><span class="nm">New Engagement campaign</span><i class="dot"></i><span class="of">Off</span><i class="d" style="left:695px"></i>
<i class="d" style="left:1042px"></i><span class="s" style="right:510px">Facebook Page visit</span>
<i class="d" style="left:1202px"></i><span class="s" style="right:345px;width:142px;overflow:hidden;text-overflow:ellipsis;text-align:left">Cost per Facebook Page visit</span>
<span class="m" style="left:1235px">Using ad set bu...</span>
<span class="m" style="right:38px">0.00<bdi dir="rtl">ج.م.</bdi></span></div>

<div class="r" style="top:774px"><i class="ck"></i><i class="tg"></i><span class="nm">Sales campaign</span><i class="dot"></i><span class="of">Off</span><i class="d" style="left:695px"></i>
<i class="d" style="left:1042px"></i><span class="s" style="right:507px;width:144px;overflow:hidden;text-overflow:ellipsis">Messaging conversations started</span>
<i class="d" style="left:1202px"></i><span class="s" style="right:345px;width:142px;overflow:hidden;text-overflow:ellipsis;text-align:left">Per messaging conversation</span>
<span class="m" style="left:1235px">Using ad set bu...</span>
<span class="m" style="right:38px">0.00<bdi dir="rtl">ج.م.</bdi></span></div>

<div class="r g" style="top:825px"><i class="ck"></i><i class="tg"></i><span class="nm">engagement campaign 15.09</span><i class="dot"></i><span class="of">Off</span><i class="d" style="left:695px"></i>
<i class="d" style="left:1042px"></i><span class="s" style="right:507px;width:144px;overflow:hidden;text-overflow:ellipsis">Messaging conversations started</span>
<i class="d" style="left:1202px"></i><span class="s" style="right:345px;width:142px;overflow:hidden;text-overflow:ellipsis;text-align:left">Per messaging conversation</span>
<span class="m" style="left:1235px">Using ad set bu...</span>
<span class="m" style="right:38px">0.00<bdi dir="rtl">ج.م.</bdi></span></div>

<div class="r" style="top:875px"><i class="ck"></i><i class="tg"></i><span class="nm">New Engagement Campaign</span><i class="dot"></i><span class="of">Off</span><i class="d" style="left:695px"></i>
<i class="d" style="left:1042px"></i>
<i class="d" style="left:1202px"></i>
<span class="m" style="left:1235px">Using ad set bu...</span>
<span class="m" style="right:38px">0.00<bdi dir="rtl">ج.م.</bdi></span></div>
</div>

<!-- column lines -->
<div class="v" style="left:229px;height:466px"></div>
<div class="v" style="left:333px;height:466px"></div>
<div class="v" style="left:686px;height:466px"></div>
<div class="v" style="left:861px;height:466px"></div>
<div class="v" style="left:1081px;height:466px"></div>
<div class="v" style="left:1242px;height:466px"></div>
<div class="v" style="left:1402px;top:572px;height:413px"></div>
<div class="v" style="left:1550px;height:466px"></div>
<div class="v" style="left:1710px;top:572px;height:413px"></div>
<div class="a" style="left:176px;top:900px;width:1562px;height:3px;background:linear-gradient(#e9ebed,#dfe2e5)"></div>
<div class="a" style="left:176px;top:985px;width:1562px;height:1px;background:#e6e8ea"></div>
<div class="t" style="left:347px;top:911px;font-size:15.700px;color:#1c2b33">Results from 9 campaigns</div>
<div class="a" style="left:535px;top:915px;width:13px;height:13px;border-radius:50%;background:#1c2b33;color:#fff;font:700 10px/13px 'Liberation Serif';text-align:center">i</div>
<div class="a" style="left:181px;top:990px;width:1054px;height:8px;background:#bdbdbd;border-radius:4px"></div>

<!-- AFTER -->
<div class="t" style="left:863px;top:336px;height:120px;line-height:120px;font-size:122px;font-weight:700;color:#000;transform-origin:0 50%;transform:scaleX(.9)">AFTER</div>

<!-- status bubble -->
<div class="a" style="left:0;top:1003px;width:640px;height:27px;background:#d8e4f6;border-radius:0 6px 0 0"></div>
<div class="t" style="left:6px;top:1007px;font-size:14.900px;color:#1f2a38">behance.net/gallery/244200863/Speech-Language-Therapy-Center-Egypt/modules/1409719...</div>

<!-- taskbar -->
<div class="a" style="left:0;top:1030px;width:1920px;height:50px;background:#1c1c1c"></div>
<svg style="left:20px;top:1045px" width="21" height="21" viewBox="0 0 21 21"><path d="M0 3l9-1.300V10H0zM10 1.500L21 0v10H10zM0 11h9v8.300L0 18zM10 11h11v10l-11-1.500z" fill="#fff"/></svg>
<div class="a" style="left:60px;top:1031px;width:360px;height:48px;background:#f0f0f0"></div>
<svg style="left:74px;top:1044px" width="22" height="24" viewBox="0 0 22 24"><circle cx="13" cy="9" r="7" fill="none" stroke="#111" stroke-width="1.500"/><path d="M8 14l-7 8" stroke="#111" stroke-width="1.700"/></svg>
<div class="t" style="left:110px;top:1044px;font-size:19px;color:#1b1b1b;line-height:22px;height:22px">Type here to search</div>
<!-- books -->
<div class="a" style="left:325px;top:1062px;width:45px;height:10px;background:#e0c060;border-radius:2px;border:2px solid #c9a040"></div>
<div class="a" style="left:339px;top:1065px;width:18px;height:4px;background:#d88a80"></div>
<div class="a" style="left:323px;top:1072px;width:47px;height:8px;background:#5f9a50"></div>
<div class="a" style="left:370px;top:1046px;width:6px;height:34px;background:#3c7fd0"></div>
<div class="a" style="left:376px;top:1041px;width:10px;height:39px;background:#d65c8c;border-top:3px solid #e8c040"></div>
<div class="a" style="left:386px;top:1037px;width:12px;height:43px;background:#b07ad0;border-top:5px solid #e8c040"></div>
<div class="a" style="left:398px;top:1042px;width:10px;height:38px;background:#a9552f;border-top:3px solid #e8c040"></div>
<div class="a" style="left:408px;top:1037px;width:12px;height:43px;background:#3f8a5e"></div>
<svg style="left:439px;top:1043px" width="22" height="26" viewBox="0 0 22 26"><path d="M1 1h14v3H1M1 9h14v8H1zM1 22h14v3H1M20 2v5M20 9v8M20 19v5" fill="none" stroke="#fff" stroke-width="1.300"/></svg>
<!-- copilot -->
<svg style="left:499px;top:1041px" width="28" height="28" viewBox="0 0 28 28"><defs><linearGradient id="cp" x1="0" x2="1" y1="0" y2="1"><stop offset="0" stop-color="#2aa7f0"/><stop offset=".4" stop-color="#5ed08a"/><stop offset=".7" stop-color="#f4c542"/><stop offset="1" stop-color="#e5489a"/></linearGradient><linearGradient id="cp2" x1="1" x2="0" y1="0" y2="1"><stop offset="0" stop-color="#8a5ce8"/><stop offset=".5" stop-color="#e5489a"/><stop offset="1" stop-color="#f4a142"/></linearGradient></defs><path d="M9 1h6c-4 2-6 6-6 12v9c0 3-2 5-5 4-3-1-4-5-4-9C0 8 3 1 9 1z" fill="url(#cp)"/><path d="M19 27h-6c4-2 6-6 6-12V6c0-3 2-5 5-4 3 1 4 5 4 9 0 9-3 16-9 16z" fill="url(#cp2)"/><path d="M9 1h8c2 0 3 1 3 3l-2 3c-3-1-6 1-7 4z" fill="#3aa0f0"/></svg>
<!-- edge -->
<svg style="left:560px;top:1040px" width="30" height="30" viewBox="0 0 30 30"><defs><linearGradient id="ed" x1="0" x2="1" y1="0" y2="1"><stop offset="0" stop-color="#35c1f1"/><stop offset="1" stop-color="#0a58a8"/></linearGradient></defs><circle cx="15" cy="15" r="15" fill="url(#ed)"/><path d="M28 16c0-5-5-7-9-7-6 0-9 5-8 10 1 4 5 6 9 5 3-1 1-2-1-3-2-2-1-5 3-5 2 0 4 1 6 0z" fill="#1c1c1c"/><path d="M5 10c3-5 10-6 15-3" fill="none" stroke="#7de4a0" stroke-width="2"/></svg>
<!-- folder -->
<svg style="left:623px;top:1042px" width="28" height="26" viewBox="0 0 28 26"><path d="M0 2c0-1 1-2 2-2h8l3 3h13c1 0 2 1 2 2v4H0z" fill="#e8a820"/><path d="M0 8h28v16c0 1-1 2-2 2H2c-1 0-2-1-2-2z" fill="#fcd34d"/><path d="M7 26v-8c0-1 1-2 2-2h10c1 0 2 1 2 2v8h-3v-7h-8v7z" fill="#0d8ad8"/></svg>
<!-- store -->
<svg style="left:685px;top:1041px" width="28" height="29" viewBox="0 0 28 29"><path d="M8 7V3c0-1 1-2 2-2h8c1 0 2 1 2 2v4" fill="none" stroke="#29b6e8" stroke-width="2"/><path d="M0 6h28v20c0 2-1 3-3 3H3c-2 0-3-1-3-3z" fill="#f5f5f5"/><path d="M9 12h4.500v4.500H9z" fill="#e24a2e"/><path d="M14.500 12H19v4.500h-4.500z" fill="#6dbf3d"/><path d="M9 17.500h4.500V22H9z" fill="#29a3e8"/><path d="M14.500 17.500H19V22h-4.500z" fill="#f5b82e"/></svg>
<!-- outlook -->
<svg style="left:747px;top:1041px" width="29" height="29" viewBox="0 0 29 29"><path d="M14 0l12 8v15c0 3-2 5-5 5H10z" fill="#2a6cd8"/><path d="M14 0L6 8v12l14-8z" fill="#66b8ff"/><path d="M6 14l20-5v14c0 3-2 5-5 5H10c-2 0-4-2-4-4z" fill="#1d54c4"/><rect x="0" y="12" width="14" height="13" rx="2" fill="#1283e0"/><text x="3" y="23" font-size="12" font-weight="700" fill="#fff" font-family="Liberation Sans">O</text></svg>
<!-- firefox -->
<svg style="left:809px;top:1039px" width="30" height="31" viewBox="0 0 30 31"><defs><linearGradient id="ff" x1="0" x2="1" y1="0" y2="1"><stop offset="0" stop-color="#ffd335"/><stop offset=".5" stop-color="#ff7a2e"/><stop offset="1" stop-color="#e8274f"/></linearGradient></defs><path d="M16 0c1 5 8 6 11 13 3 8-2 18-12 18S0 24 0 16c0-4 2-7 3-8 0 3 1 4 3 5 1-5 6-7 10-13z" fill="url(#ff)"/><circle cx="15" cy="17" r="7.500" fill="#7a2fc4"/><path d="M10 14c2-2 8-3 10 2-2 4-7 3-9 2z" fill="#c25ae0"/></svg>
<div class="chr" style="left:871px"></div>
<div class="a" style="left:918px;top:1030px;width:61px;height:50px;background:#4a4a4a"></div>
<div class="a" style="left:918px;top:1077px;width:61px;height:3px;background:#76b9ed"></div>
<div class="chr" style="left:933px"></div>
<!-- tray -->
<div class="a" style="left:1183px;top:1041px;width:66px;height:28px;background:#000;border:1px solid #fff;color:#fff;font:16px/26px 'Liberation Sans';text-align:center">A/C</div>
<div class="a" style="left:1249px;top:1049px;width:3px;height:12px;background:#000;border:1px solid #fff;border-left:0"></div>
<div class="a" style="left:1347px;top:1042px;width:26px;height:34px;border-radius:50%;background:radial-gradient(circle at 70% 35%,#ffb300,#f07a10 65%,#d95a10)"></div>
<div class="a" style="left:1362px;top:1040px;width:14px;height:15px;border-radius:50%;background:#c8281e;color:#fff;font:700 10px/15px 'Liberation Sans';text-align:center">1</div>
<div class="t" style="left:1386px;top:1045px;font-size:18px;color:#fff">20°C</div>
<div class="t" dir="rtl" style="left:1430px;top:1046px;width:61px;font-size:18px;color:#fff">مشمس</div>
<svg style="left:1522px;top:1049px" width="15" height="10" viewBox="0 0 15 10"><path d="M1 9l6.500-7.500L14 9" fill="none" stroke="#fff" stroke-width="1.400"/></svg>
<div class="a" style="left:1550px;top:1045px;width:20px;height:20px;border-radius:50%;background:#d4c51a;border:2px solid #3c9a2e"></div>
<svg style="left:1555px;top:1050px" width="10" height="10" viewBox="0 0 10 10"><path d="M3.500 0h3v3.500H10v3H6.500V10h-3V6.500H0v-3h3.500z" fill="#1c7a2a"/></svg>
<div class="a" style="left:1580px;top:1048px;width:18px;height:18px;border-radius:50%;background:#d8dde2"></div>
<div class="a" style="left:1591px;top:1057px;width:11px;height:11px;border-radius:50%;background:#1a80e0"></div>
<svg style="left:1612px;top:1046px" width="18" height="20" viewBox="0 0 18 20"><rect x="1" y="4" width="12" height="12" rx="2" fill="none" stroke="#fff" stroke-width="1.300"/><path d="M13 8l4-2v8l-4-2M4 1h7M4 19h7" fill="none" stroke="#fff" stroke-width="1.300"/></svg>
<svg style="left:1641px;top:1047px" width="20" height="17" viewBox="0 0 20 17"><rect x="2" y="4" width="17" height="12" fill="none" stroke="#fff" stroke-width="1.300"/><rect x="5" y="7" width="11" height="6" fill="#fff"/><path d="M2 1v3M5 1v3" stroke="#fff" stroke-width="1.300"/></svg>
<svg style="left:1674px;top:1047px" width="18" height="18" viewBox="0 0 18 18"><path d="M1 17a15 15 0 0 1 16-15M5 17a10 10 0 0 1 12-10M9 17a5 5 0 0 1 6-5" fill="none" stroke="#9a9a9a" stroke-width="1.300"/></svg>
<svg style="left:1700px;top:1046px" width="20" height="20" viewBox="0 0 20 20"><path d="M1 7h4l5-5v16l-5-5H1zM13 6a6 6 0 0 1 0 8M16 3a10 10 0 0 1 0 14" fill="none" stroke="#ddd" stroke-width="1.200"/></svg>
<div class="t" style="left:1732px;top:1045px;font-size:15px;color:#fff">ENG</div>
<div class="t" style="left:1778px;top:1033px;width:68px;text-align:center;font-size:15px;color:#fff">9:15 AM</div>
<div class="t" style="left:1776px;top:1056px;width:72px;text-align:center;font-size:15px;color:#fff">4/19/2026</div>
<svg style="left:1868px;top:1044px" width="20" height="20" viewBox="0 0 20 20"><path d="M0 0h20v15H5l-5 5z" fill="#fff"/><path d="M3 4h14M3 8h14M3 12h9" stroke="#1c1c1c" stroke-width="1.200"/></svg>
<div class="a" style="left:1878px;top:1056px;width:20px;height:20px;border-radius:50%;background:#333;border:1px solid #888;color:#fff;font:700 13px/18px 'Liberation Sans';text-align:center">5</div>
</body></html>
